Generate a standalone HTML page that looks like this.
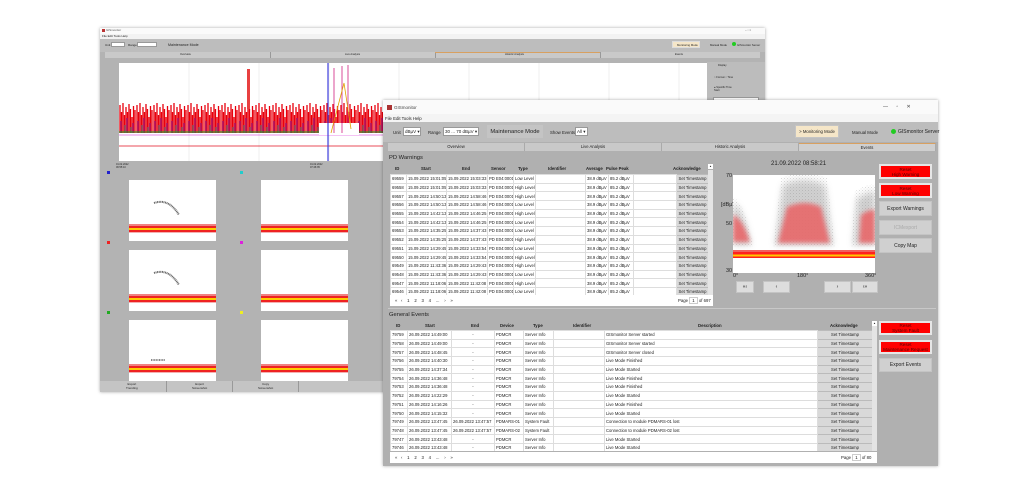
<!DOCTYPE html>
<html><head><meta charset="utf-8"><style>
*{box-sizing:border-box;margin:0;padding:0}
body{width:1024px;height:504px;background:#fff;position:relative;overflow:hidden;font-family:"Liberation Sans",sans-serif;color:#222}
.a{position:absolute}
.win{position:absolute;background:#b3b3b3;box-shadow:0 0 3px rgba(0,0,0,.35)}
.t{font-size:4.3px;white-space:nowrap;position:absolute}
table{border-collapse:collapse;table-layout:fixed;position:absolute;font-size:4.2px}
td{height:8.7px;border:1px solid #ddd;background:#fff;white-space:nowrap;overflow:hidden;padding:0 1px}
td.b{background:#d9d9d9;text-align:center;border:1px solid #bbb}
td.c{text-align:center}
.hd{position:absolute;font-size:4.3px;font-weight:bold}
.btn{position:absolute;background:#d0d0d0;border:1px solid #c4c4c4;font-size:5px;display:flex;align-items:center;justify-content:center;text-align:center;white-space:nowrap}
.red{background:#ff0000;color:#500;border:2px solid #e6e6e6;font-size:4.6px;line-height:5px}
.sel{position:absolute;background:#fff;border:1px solid #999;font-size:4.5px;padding-left:1px;line-height:7px;height:9px;white-space:nowrap}
.tab{position:absolute;top:0;height:8px;font-size:4.2px;text-align:center;line-height:8px;background:#c9c9c9;border-right:1px solid #aaa}
</style></head><body>

<!-- BACK WINDOW -->
<div class="win" style="left:100px;top:28px;width:665px;height:364px">
 <div class="a" style="left:0;top:0;width:665px;height:6px;background:#fafafa"></div>
 <div class="a" style="left:2px;top:1px;width:3px;height:3px;background:#b33"></div>
 <div class="t" style="left:6px;top:0;font-size:3px;color:#555">GISmonitor</div>
 <div class="t" style="left:645px;top:0;font-size:3px;color:#555">–  ▫  ×</div>
 <div class="a" style="left:0;top:6px;width:665px;height:5px;background:#f2f2f2"></div>
 <div class="t" style="left:2px;top:6px;font-size:3px">File Edit Tools Help</div>
 <div class="a" style="left:0;top:11px;width:665px;height:13px;background:#bdbdbd"></div>
 <div class="t" style="left:5px;top:15px;font-size:3px">Unit</div>
 <div class="a" style="left:11px;top:14px;width:14px;height:5px;background:#fff;border:1px solid #999"></div>
 <div class="t" style="left:28px;top:15px;font-size:3px">Range</div>
 <div class="a" style="left:37px;top:14px;width:20px;height:5px;background:#fff;border:1px solid #999"></div>
 <div class="t" style="left:68px;top:15px;font-size:3.6px">Maintenance Mode</div>
 <div class="a" style="left:572px;top:13px;width:28px;height:7px;background:#f5e6c8;border:1px solid #ddd"></div>
 <div class="t" style="left:577px;top:15px;font-size:2.8px">Monitoring Mode</div>
 <div class="t" style="left:610px;top:15px;font-size:2.8px">Manual Mode</div>
 <div class="a" style="left:632px;top:14px;width:4px;height:4px;border-radius:2px;background:#2c2"></div>
 <div class="t" style="left:637px;top:15px;font-size:2.8px">GISmonitor Server</div>
 <div class="a" style="left:5px;top:24px;width:655px;height:6px;background:#c9c9c9"></div>
 <div class="a" style="left:170px;top:24px;width:1px;height:6px;background:#999"></div>
 <div class="a" style="left:335px;top:24px;width:1px;height:6px;background:#999"></div>
 <div class="a" style="left:335px;top:24px;width:165px;height:1px;background:#d8a060"></div>
 <div class="a" style="left:500px;top:24px;width:1px;height:6px;background:#999"></div>
 <div class="t" style="left:80px;top:25px;font-size:2.6px">Overview</div>
 <div class="t" style="left:245px;top:25px;font-size:2.6px">Live Analysis</div>
 <div class="t" style="left:405px;top:25px;font-size:2.6px">Historic Analysis</div>
 <div class="t" style="left:575px;top:25px;font-size:2.6px">Events</div>
 <!-- chart -->
 <svg class="a" style="left:19px;top:35px" width="588" height="98">
  <defs><pattern id="nz" width="17" height="40" patternUnits="userSpaceOnUse">
   <path d="M1 2V32M2.5 9V32M4 0V32M5.5 12V32M7 4V32M8.5 9V32M10 1V32M11.5 6V32M13 14V32M14.5 3V32M16 7V32" stroke="#e8000c" stroke-width="1.3"/>
   <path d="M2 18V32M8 15V32M14 20V32" stroke="#6020d0" stroke-width=".7"/>
   <path d="M6 22V32M12 24V32" stroke="#10b0c0" stroke-width=".7"/>
  </pattern></defs>
  <rect width="588" height="98" fill="#fff"/>
  <g stroke="#e4e4e4" stroke-width=".6"><path d="M70 0V98M140 0V98M210 0V98M280 0V98M350 0V98M420 0V98M490 0V98M560 0V98"/></g>
  <rect x="0" y="36" width="588" height="34" fill="url(#nz)"/>
  <path d="M0 69H588" stroke="#20a020" stroke-width="1"/>
  <path d="M0 72H588" stroke="#e060e0" stroke-width=".7"/>
  <path d="M0 83H588" stroke="#e01020" stroke-width=".7"/>
  <rect x="128" y="6" width="3" height="40" fill="#e84040"/>
  <rect x="200" y="60" width="40" height="12" fill="#fff"/>
  <path d="M209 0V98" stroke="#4040e0" stroke-width="1.2"/>
  <path d="M215 5V70M223 3V70M229 2V60" stroke="#d02080" stroke-width=".8"/>
  <path d="M212 70L225 20L232 66" stroke="#e0a000" stroke-width=".8" fill="none"/>
 </svg>
 <div class="t" style="left:16px;top:135px;font-size:2.5px">01.02.2022<br>06:55:10</div>
 <div class="t" style="left:210px;top:135px;font-size:2.5px">01.02.2022<br>07:46:35</div>
 <div class="t" style="left:500px;top:135px;font-size:2.5px">01.02.2022<br>09:54:02</div>
 <div class="a" style="left:607px;top:34px;width:58px;height:42px;background:#bcbcbc"></div>
 <div class="t" style="left:618px;top:36px;font-size:2.6px">Display</div>
 <div class="t" style="left:614px;top:48px;font-size:2.6px">○ Format   ○ Time</div>
 <div class="t" style="left:614px;top:58px;font-size:2.6px">● Specific Time<br>Start</div>
 <div class="a" style="left:613px;top:69px;width:46px;height:5px;background:#fff;border:1px solid #999"></div>
 <!-- small plots -->
 <div class="a" style="left:7px;top:143px;width:3px;height:3px;background:#22c"></div>
 <div class="a" style="left:140px;top:143px;width:3px;height:3px;background:#2cc"></div>
 <div class="a" style="left:7px;top:213px;width:3px;height:3px;background:#e22"></div>
 <div class="a" style="left:140px;top:213px;width:3px;height:3px;background:#d2d"></div>
 <div class="a" style="left:7px;top:283px;width:3px;height:3px;background:#2a2"></div>
 <div class="a" style="left:140px;top:283px;width:3px;height:3px;background:#ee2"></div>
 <svg class="a" style="left:29px;top:152px" width="250" height="201">
  <defs><g id="sp"><rect width="87" height="61" fill="#fff"/><rect y="44" width="87" height="2" fill="#f08080"/><rect y="46" width="87" height="2" fill="#ee2222"/><rect y="48" width="87" height="2" fill="#ffcc00"/><rect y="50" width="87" height="2" fill="#ee2222"/><rect y="52" width="87" height="1" fill="#f4b0b0"/></g></defs>
  <use href="#sp"/><use href="#sp" x="132"/>
  <use href="#sp" y="70"/><use href="#sp" x="132" y="70"/>
  <use href="#sp" y="140"/><use href="#sp" x="132" y="140"/>
  <path d="M25 23Q40 18 50 35" stroke="#666" stroke-width="2" fill="none" stroke-dasharray="1 .6"/>
  <path d="M25 93Q40 88 50 105" stroke="#666" stroke-width="2" fill="none" stroke-dasharray="1 .6"/>
  <path d="M22 180h14" stroke="#888" stroke-width="2" stroke-dasharray="1 .6"/>
 </svg>
 <div class="a" style="left:0;top:353px;width:665px;height:11px;background:#c4c4c4"></div>
 <div class="a" style="left:66px;top:353px;width:1px;height:11px;background:#999"></div>
 <div class="a" style="left:132px;top:353px;width:1px;height:11px;background:#999"></div>
 <div class="a" style="left:198px;top:353px;width:1px;height:11px;background:#999"></div>
 <div class="t" style="left:26px;top:354px;font-size:3px;text-align:center">Export<br>Trending</div>
 <div class="t" style="left:92px;top:354px;font-size:3px;text-align:center">Export<br>Screenshot</div>
 <div class="t" style="left:158px;top:354px;font-size:3px;text-align:center">Copy<br>Screenshot</div>
</div>

<!-- FRONT WINDOW -->
<div class="win" style="left:383px;top:100px;width:555px;height:366px;background:#b0b0b0">
 <div class="a" style="left:0;top:0;width:555px;height:14px;background:#fafafa"></div>
 <div class="a" style="left:4px;top:5px;width:5px;height:5px;background:#a33"></div>
 <div class="t" style="left:11px;top:5px;font-size:4.5px;color:#444">GISmonitor</div>
 <div class="t" style="left:500px;top:4px;font-size:5px;color:#444">—&nbsp;&nbsp;&nbsp;&nbsp;&nbsp;&nbsp;▫&nbsp;&nbsp;&nbsp;&nbsp;&nbsp;&nbsp;✕</div>
 <div class="a" style="left:0;top:14px;width:555px;height:8px;background:#f4f4f4"></div>
 <div class="t" style="left:2px;top:16px;font-size:4.3px">File  Edit  Tools  Help</div>
 <div class="a" style="left:0;top:22px;width:555px;height:20px;background:#bdbdbd"></div>
 <div class="t" style="left:10px;top:30px">Unit</div>
 <div class="sel" style="left:20px;top:27px;width:18px">dBµV ▾</div>
 <div class="t" style="left:45px;top:30px">Range</div>
 <div class="sel" style="left:60px;top:27px;width:36px">30 ... 70 dBµV ▾</div>
 <div class="btn" style="left:104px;top:25px;width:56px;height:13px;font-size:5.8px;background:#c4c4c4">Maintenance Mode</div>
 <div class="t" style="left:167px;top:30px">Show Events:</div>
 <div class="sel" style="left:192px;top:27px;width:13px">All ▾</div>
 <div class="btn" style="left:412px;top:25px;width:44px;height:13px;background:#f5e6c8;font-size:4.3px">&gt; Monitoring Mode</div>
 <div class="t" style="left:469px;top:30px">Manual Mode</div>
 <div class="a" style="left:508px;top:29px;width:5px;height:5px;border-radius:2.5px;background:#22cc22"></div>
 <div class="t" style="left:515px;top:29px;font-size:5px">GISmonitor Server</div>
 <div class="a" style="left:5px;top:43px;width:548px;height:8px;background:#c9c9c9">
  <div class="tab" style="left:0;width:137px">Overview</div>
  <div class="tab" style="left:137px;width:137px">Live Analysis</div>
  <div class="tab" style="left:274px;width:137px">Historic Analysis</div>
  <div class="tab" style="left:411px;width:137px;background:#cfcfcf;border-top:1px solid #d8a060">Events</div>
 </div>
 <div class="t" style="left:6px;top:55px;font-size:5.8px">PD Warnings</div>
 <div class="hd" style="left:12px;top:66px">ID</div>
 <div class="hd" style="left:38px;top:66px">Start</div>
 <div class="hd" style="left:79px;top:66px">End</div>
 <div class="hd" style="left:108px;top:66px">Sensor</div>
 <div class="hd" style="left:135px;top:66px">Type</div>
 <div class="hd" style="left:165px;top:66px">Identifier</div>
 <div class="hd" style="left:203px;top:66px">Average</div>
 <div class="hd" style="left:223px;top:66px">Pulse Peak</div>
 <div class="hd" style="left:290px;top:66px">Acknowledge</div>
 <div class="a" style="left:325px;top:64px;width:5px;height:5px;background:#fff;font-size:3px;text-align:center">▴</div>
 <div class="a" style="left:7px;top:74px;width:318px;height:121px;background:#fff;overflow:hidden">
 <table style="left:0;top:0;width:318px">
 <colgroup><col style="width:16px"><col style="width:40px"><col style="width:41px"><col style="width:26px"><col style="width:22px"><col style="width:50px"><col style="width:23px"><col style="width:25px"><col style="width:43px"><col style="width:32px"></colgroup>
 <tr><td>69559</td><td>15.09.2022 15:01:05</td><td>15.09.2022 15:03:33</td><td>PD E04:0001</td><td>Low Level</td><td></td><td>38.9 dBµV</td><td>85.2 dBµV</td><td></td><td class="b">Set Timestamp</td></tr>
 <tr><td>69558</td><td>15.09.2022 15:01:05</td><td>15.09.2022 15:03:33</td><td>PD E04:0001</td><td>High Level</td><td></td><td>38.9 dBµV</td><td>85.2 dBµV</td><td></td><td class="b">Set Timestamp</td></tr>
 <tr><td>69557</td><td>15.09.2022 14:50:13</td><td>15.09.2022 14:58:46</td><td>PD E04:0001</td><td>High Level</td><td></td><td>38.9 dBµV</td><td>85.2 dBµV</td><td></td><td class="b">Set Timestamp</td></tr>
 <tr><td>69556</td><td>15.09.2022 14:50:13</td><td>15.09.2022 14:58:46</td><td>PD E04:0001</td><td>Low Level</td><td></td><td>38.9 dBµV</td><td>85.2 dBµV</td><td></td><td class="b">Set Timestamp</td></tr>
 <tr><td>69555</td><td>15.09.2022 14:42:13</td><td>15.09.2022 14:46:25</td><td>PD E04:0001</td><td>High Level</td><td></td><td>38.9 dBµV</td><td>85.2 dBµV</td><td></td><td class="b">Set Timestamp</td></tr>
 <tr><td>69554</td><td>15.09.2022 14:42:13</td><td>15.09.2022 14:46:25</td><td>PD E04:0001</td><td>Low Level</td><td></td><td>38.9 dBµV</td><td>85.2 dBµV</td><td></td><td class="b">Set Timestamp</td></tr>
 <tr><td>69553</td><td>15.09.2022 14:35:25</td><td>15.09.2022 14:37:43</td><td>PD E04:0001</td><td>Low Level</td><td></td><td>38.9 dBµV</td><td>85.2 dBµV</td><td></td><td class="b">Set Timestamp</td></tr>
 <tr><td>69552</td><td>15.09.2022 14:35:25</td><td>15.09.2022 14:37:43</td><td>PD E04:0001</td><td>High Level</td><td></td><td>38.9 dBµV</td><td>85.2 dBµV</td><td></td><td class="b">Set Timestamp</td></tr>
 <tr><td>69551</td><td>15.09.2022 14:29:45</td><td>15.09.2022 14:33:54</td><td>PD E04:0001</td><td>Low Level</td><td></td><td>38.9 dBµV</td><td>85.2 dBµV</td><td></td><td class="b">Set Timestamp</td></tr>
 <tr><td>69550</td><td>15.09.2022 14:29:45</td><td>15.09.2022 14:33:54</td><td>PD E04:0001</td><td>High Level</td><td></td><td>38.9 dBµV</td><td>85.2 dBµV</td><td></td><td class="b">Set Timestamp</td></tr>
 <tr><td>69549</td><td>15.09.2022 11:43:36</td><td>15.09.2022 14:29:43</td><td>PD E04:0001</td><td>High Level</td><td></td><td>38.9 dBµV</td><td>85.2 dBµV</td><td></td><td class="b">Set Timestamp</td></tr>
 <tr><td>69548</td><td>15.09.2022 11:43:36</td><td>15.09.2022 14:29:43</td><td>PD E04:0001</td><td>Low Level</td><td></td><td>38.9 dBµV</td><td>85.2 dBµV</td><td></td><td class="b">Set Timestamp</td></tr>
 <tr><td>69547</td><td>15.09.2022 11:18:06</td><td>15.09.2022 11:42:08</td><td>PD E04:0001</td><td>High Level</td><td></td><td>38.9 dBµV</td><td>85.2 dBµV</td><td></td><td class="b">Set Timestamp</td></tr>
 <tr><td>69546</td><td>15.09.2022 11:18:06</td><td>15.09.2022 11:42:08</td><td>PD E04:0001</td><td>Low Level</td><td></td><td>38.9 dBµV</td><td>85.2 dBµV</td><td></td><td class="b">Set Timestamp</td></tr>
 </table></div>
 <div class="a" style="left:325px;top:70px;width:5px;height:126px;background:#e4e4e4"></div>
 <div class="a" style="left:7px;top:195px;width:323px;height:11px;background:#fff"></div>
 <div class="t" style="left:12px;top:198px">«&nbsp;&nbsp;&nbsp;‹&nbsp;&nbsp;&nbsp;&nbsp;1&nbsp;&nbsp;&nbsp;&nbsp;2&nbsp;&nbsp;&nbsp;&nbsp;3&nbsp;&nbsp;&nbsp;&nbsp;4&nbsp;&nbsp;&nbsp;&nbsp;...&nbsp;&nbsp;&nbsp;&nbsp;›&nbsp;&nbsp;&nbsp;&nbsp;»</div>
 <div class="t" style="left:295px;top:198px">Page <span style="border:1px solid #ccc;padding:0 2px">1</span> of 697</div>
 <!-- scatter -->
 <div class="t" style="left:388px;top:61px;font-size:6px">21.09.2022 08:58:21</div>
 <div class="t" style="left:343px;top:73px;font-size:5.5px">70</div>
 <div class="t" style="left:338px;top:102px;font-size:5.5px">[dBµV]</div>
 <div class="t" style="left:343px;top:121px;font-size:5.5px">50</div>
 <div class="t" style="left:343px;top:168px;font-size:5.5px">30</div>
 <div class="t" style="left:350px;top:173px;font-size:5.5px">0°</div>
 <div class="t" style="left:414px;top:173px;font-size:5.5px">180°</div>
 <div class="t" style="left:482px;top:173px;font-size:5.5px">360°</div>
 <svg class="a" style="left:350px;top:75px" width="142" height="98">
  <defs><filter id="bl"><feGaussianBlur stdDeviation="2"/></filter><filter id="bl2"><feGaussianBlur stdDeviation="3.5"/></filter>
  <pattern id="dots" width="3" height="3" patternUnits="userSpaceOnUse"><rect width=".8" height=".8" fill="#666"/><rect x="1.7" y="1.6" width=".7" height=".7" fill="#888"/></pattern></defs>
  <rect width="142" height="98" fill="#fff"/>
  <g opacity=".45" filter="url(#bl2)"><path d="M0 28Q10 32 18 70H0Z M50 10Q70 0 92 10L100 70H42Z M124 24Q136 16 142 17V70H120Z" fill="#999"/></g>
  <g opacity=".35"><path d="M0 22Q12 28 20 72H0Z M48 3Q70 -6 94 3L102 72H40Z M122 16Q136 8 142 10V72H118Z" fill="url(#dots)"/></g>
  <g filter="url(#bl)" opacity=".9"><path d="M0 40Q10 44 17 67H0Z M54 32Q72 24 88 32L97 68H45Z M128 40Q136 34 142 35V68H126Z" fill="#e8686a"/></g>
  <rect y="75" width="142" height="2" fill="#f06060"/><rect y="77" width="142" height="2.5" fill="#ff2020"/><rect y="79.5" width="142" height="2" fill="#ffc800"/><rect y="81.5" width="142" height="1.5" fill="#ff2020"/>
 </svg>
 <div class="btn" style="left:353px;top:181px;width:18px;height:12px;background:#ddd">«‹</div>
 <div class="btn" style="left:380px;top:181px;width:27px;height:12px;background:#ddd">‹</div>
 <div class="btn" style="left:441px;top:181px;width:27px;height:12px;background:#ddd">›</div>
 <div class="btn" style="left:469px;top:181px;width:26px;height:12px;background:#ddd">›»</div>
 <div class="btn red" style="left:496px;top:64px;width:53px;height:15px">Reset<br>High Warning</div>
 <div class="btn red" style="left:496px;top:83px;width:53px;height:15px">Reset<br>Low Warning</div>
 <div class="btn" style="left:496px;top:101px;width:53px;height:15px">Export Warnings</div>
 <div class="btn" style="left:496px;top:120px;width:53px;height:15px;color:#aaa">ICMexport</div>
 <div class="btn" style="left:496px;top:138px;width:53px;height:15px">Copy Map</div>
 <!-- General events -->
 <div class="a" style="left:5px;top:208px;width:548px;height:1px;background:#c8c8c8"></div>
 <div class="t" style="left:6px;top:212px;font-size:5.8px">General Events</div>
 <div class="hd" style="left:13px;top:223px">ID</div>
 <div class="hd" style="left:42px;top:223px">Start</div>
 <div class="hd" style="left:88px;top:223px">End</div>
 <div class="hd" style="left:117px;top:223px">Device</div>
 <div class="hd" style="left:150px;top:223px">Type</div>
 <div class="hd" style="left:190px;top:223px">Identifier</div>
 <div class="hd" style="left:315px;top:223px">Description</div>
 <div class="hd" style="left:447px;top:223px">Acknowledge</div>
 <div class="a" style="left:489px;top:221px;width:5px;height:5px;background:#fff;font-size:3px;text-align:center">▴</div>
 <div class="a" style="left:7px;top:230px;width:482px;height:121px;background:#fff;overflow:hidden">
 <table style="left:0;top:0;width:482px">
 <colgroup><col style="width:17px"><col style="width:44px"><col style="width:43px"><col style="width:29px"><col style="width:30px"><col style="width:51px"><col style="width:213px"><col style="width:55px"></colgroup>
 <tr><td>79759</td><td>26.09.2022 14:49:00</td><td class="c">-</td><td>PDMCR</td><td>Server Info</td><td></td><td>GISmonitor Server started</td><td class="b">Set Timestamp</td></tr>
 <tr><td>79758</td><td>26.09.2022 14:49:00</td><td class="c">-</td><td>PDMCR</td><td>Server Info</td><td></td><td>GISmonitor Server started</td><td class="b">Set Timestamp</td></tr>
 <tr><td>79757</td><td>26.09.2022 14:48:45</td><td class="c">-</td><td>PDMCR</td><td>Server Info</td><td></td><td>GISmonitor Server closed</td><td class="b">Set Timestamp</td></tr>
 <tr><td>79756</td><td>26.09.2022 14:40:30</td><td class="c">-</td><td>PDMCR</td><td>Server Info</td><td></td><td>Live Mode Finished</td><td class="b">Set Timestamp</td></tr>
 <tr><td>79755</td><td>26.09.2022 14:37:34</td><td class="c">-</td><td>PDMCR</td><td>Server Info</td><td></td><td>Live Mode Started</td><td class="b">Set Timestamp</td></tr>
 <tr><td>79754</td><td>26.09.2022 14:36:48</td><td class="c">-</td><td>PDMCR</td><td>Server Info</td><td></td><td>Live Mode Finished</td><td class="b">Set Timestamp</td></tr>
 <tr><td>79753</td><td>26.09.2022 14:36:48</td><td class="c">-</td><td>PDMCR</td><td>Server Info</td><td></td><td>Live Mode Finished</td><td class="b">Set Timestamp</td></tr>
 <tr><td>79752</td><td>26.09.2022 14:22:29</td><td class="c">-</td><td>PDMCR</td><td>Server Info</td><td></td><td>Live Mode Started</td><td class="b">Set Timestamp</td></tr>
 <tr><td>79751</td><td>26.09.2022 14:16:26</td><td class="c">-</td><td>PDMCR</td><td>Server Info</td><td></td><td>Live Mode Finished</td><td class="b">Set Timestamp</td></tr>
 <tr><td>79750</td><td>26.09.2022 14:15:32</td><td class="c">-</td><td>PDMCR</td><td>Server Info</td><td></td><td>Live Mode Started</td><td class="b">Set Timestamp</td></tr>
 <tr><td>79749</td><td>26.09.2022 13:47:45</td><td>26.09.2022 13:47:57</td><td>PDMARS-01</td><td>System Fault</td><td></td><td>Connection to module PDMARS-01 lost</td><td class="b">Set Timestamp</td></tr>
 <tr><td>79748</td><td>26.09.2022 13:47:45</td><td>26.09.2022 13:47:57</td><td>PDMARS-02</td><td>System Fault</td><td></td><td>Connection to module PDMARS-02 lost</td><td class="b">Set Timestamp</td></tr>
 <tr><td>79747</td><td>26.09.2022 13:43:48</td><td class="c">-</td><td>PDMCR</td><td>Server Info</td><td></td><td>Live Mode Started</td><td class="b">Set Timestamp</td></tr>
 <tr><td>79746</td><td>26.09.2022 13:43:48</td><td class="c">-</td><td>PDMCR</td><td>Server Info</td><td></td><td>Live Mode Started</td><td class="b">Set Timestamp</td></tr>
 </table></div>
 <div class="a" style="left:489px;top:226px;width:5px;height:125px;background:#e4e4e4"></div>
 <div class="a" style="left:7px;top:352px;width:487px;height:11px;background:#fff"></div>
 <div class="t" style="left:12px;top:355px">«&nbsp;&nbsp;&nbsp;‹&nbsp;&nbsp;&nbsp;&nbsp;1&nbsp;&nbsp;&nbsp;&nbsp;2&nbsp;&nbsp;&nbsp;&nbsp;3&nbsp;&nbsp;&nbsp;&nbsp;4&nbsp;&nbsp;&nbsp;&nbsp;...&nbsp;&nbsp;&nbsp;&nbsp;›&nbsp;&nbsp;&nbsp;&nbsp;»</div>
 <div class="t" style="left:458px;top:355px">Page <span style="border:1px solid #ccc;padding:0 2px">1</span> of 80</div>
 <div class="btn red" style="left:496px;top:221px;width:53px;height:14px">Reset<br>System Fault</div>
 <div class="btn red" style="left:496px;top:240px;width:53px;height:14px">Reset<br>Maintenance Request</div>
 <div class="btn" style="left:496px;top:258px;width:53px;height:14px">Export Events</div>
</div>
</body></html>
